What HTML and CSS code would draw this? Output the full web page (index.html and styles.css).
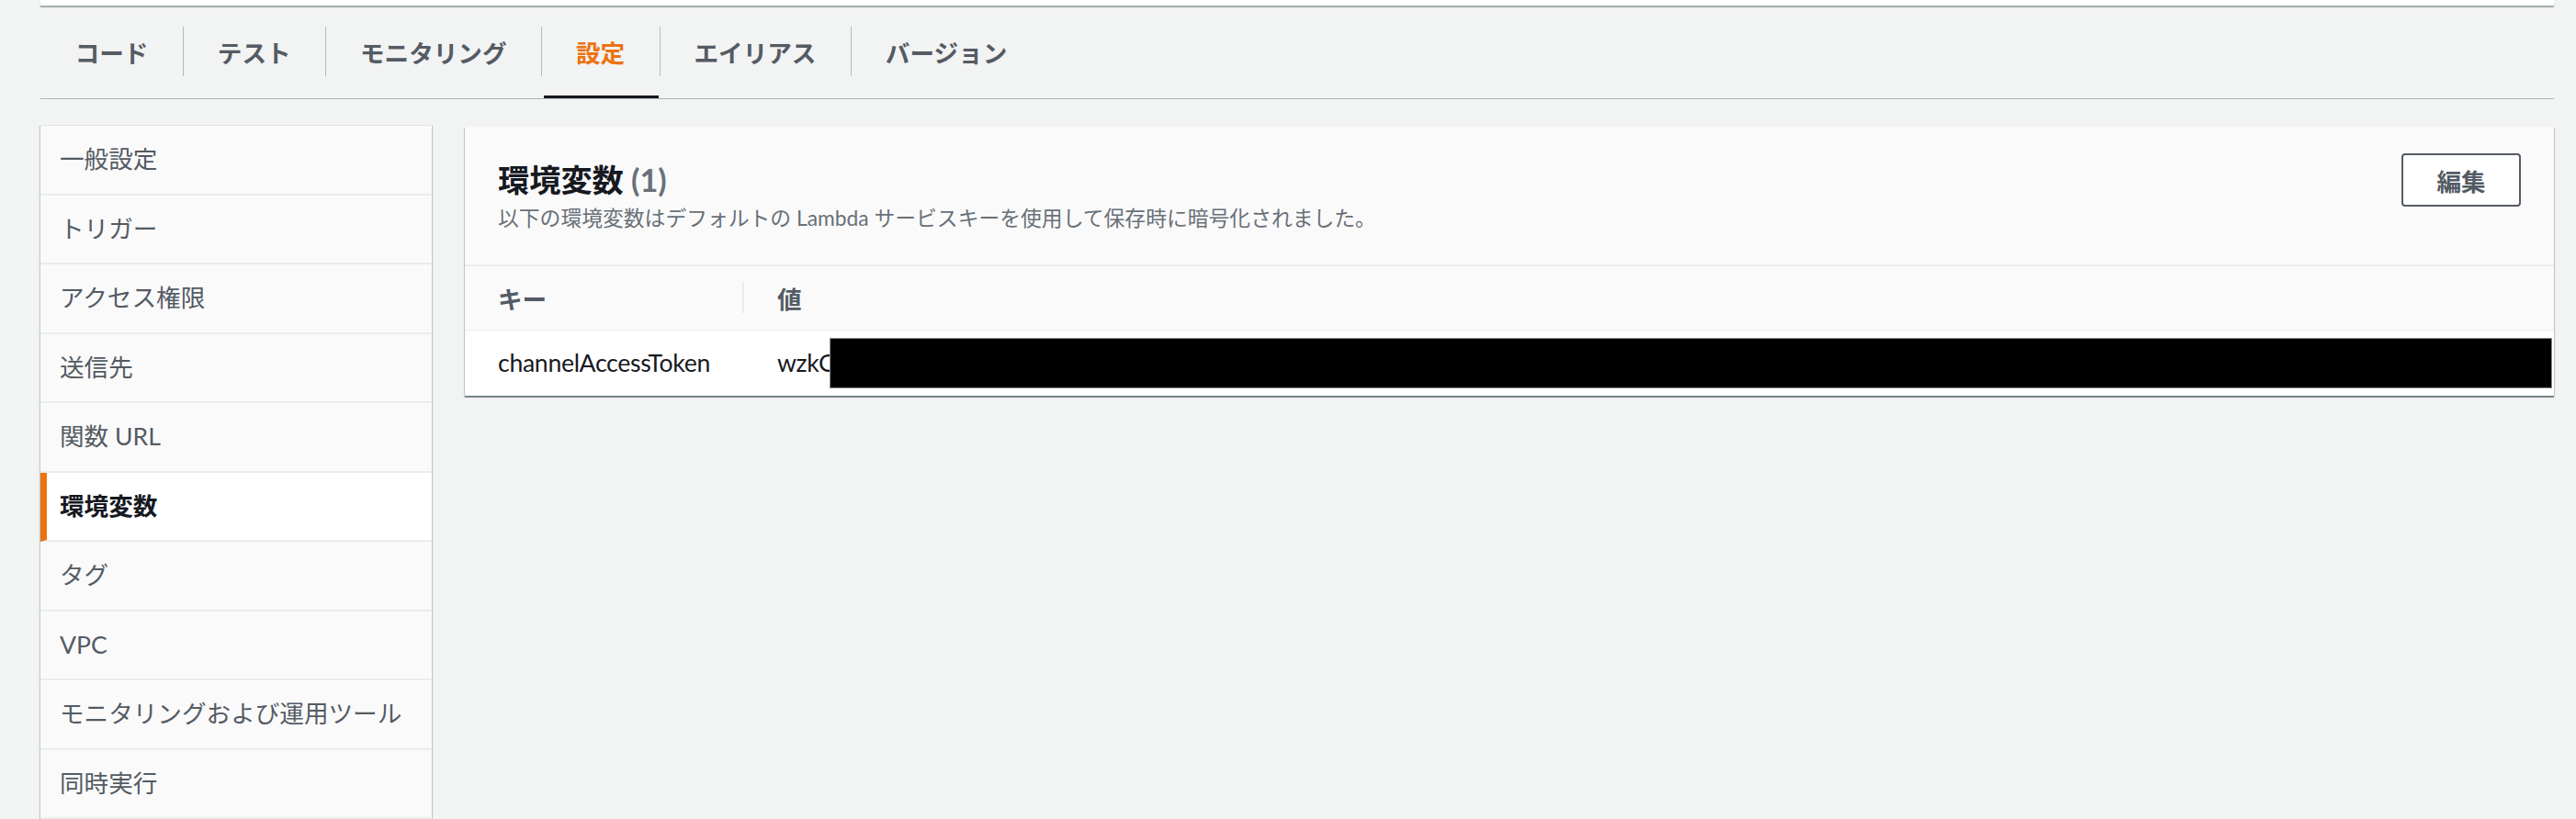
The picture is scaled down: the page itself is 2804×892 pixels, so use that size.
FILE: index.html
```html
<!DOCTYPE html>
<html lang="ja">

<head>
    <meta charset="UTF-8">
    <meta name="viewport" content="width=device-width, initial-scale=1.0">
    <title>環境変数</title>
    <link rel="stylesheet" href="styles.css">
</head>

<body>
    <div class="page">
        <div class="topcard"></div>

        <!-- タブ -->
        <nav class="tabs">
            <a class="tab">コード</a>
            <a class="tab">テスト</a>
            <a class="tab">モニタリング</a>
            <a class="tab active">設定</a>
            <a class="tab">エイリアス</a>
            <a class="tab">バージョン</a>
        </nav>

        <div class="layout">
            <!-- 設定メニュー -->
            <ul class="sidenav">
                <li>一般設定</li>
                <li>トリガー</li>
                <li>アクセス権限</li>
                <li>送信先</li>
                <li>関数 URL</li>
                <li class="active">環境変数</li>
                <li>タグ</li>
                <li>VPC</li>
                <li>モニタリングおよび運用ツール</li>
                <li>同時実行</li>
            </ul>

            <!-- 環境変数パネル -->
            <section class="panel">
                <div class="panel-head">
                    <div>
                        <h2 class="panel-title">環境変数 <span class="count">(1)</span></h2>
                        <p class="panel-desc">以下の環境変数はデフォルトの Lambda サービスキーを使用して保存時に暗号化されました。</p>
                    </div>
                    <button class="btn">編集</button>
                </div>
                <table class="vars">
                    <thead>
                        <tr>
                            <th>キー</th>
                            <th>値</th>
                        </tr>
                    </thead>
                    <tbody>
                        <tr>
                            <td class="key">channelAccessToken</td>
                            <td class="key">wzkC<span class="redact"></span></td>
                        </tr>
                    </tbody>
                </table>
            </section>
        </div>
    </div>
</body>

</html>
```

FILE: styles.css
```css
body {
    margin: 0;
    background: #f2f3f3;
    font-family: Lato, "Noto Sans CJK JP", sans-serif;
    font-size: 26.6px;
    color: #16191f;
}

.page {
    padding: 0 24px 0 44px;
}

.topcard {
    height: 6px;
    background: #fff;
    box-shadow: 0 2px 1px rgba(0, 28, 36, 0.3);
}

/* タブ */
.tabs {
    display: flex;
    height: 101px;
    border-bottom: 1px solid #aab7b8;
}

.tab {
    position: relative;
    display: flex;
    align-items: center;
    padding: 0 37.7px;
    font-weight: 700;
    color: #545b64;
    cursor: pointer;
}

.tab + .tab::before {
    content: "";
    position: absolute;
    left: 0;
    top: 23px;
    width: 1px;
    height: 54px;
    background: #b4bcbd;
}

.tab.active {
    color: #ec7211;
}

.tab.active::after {
    content: "";
    position: absolute;
    left: 3px;
    right: 1px;
    bottom: 0;
    height: 3px;
    background: #16191f;
}

.layout {
    display: flex;
    align-items: flex-start;
    gap: 36px;
    margin-top: 29px;
}

/* 左メニュー */
.sidenav {
    flex: none;
    width: 426px;
    margin: 0;
    padding: 0;
    list-style: none;
    background: #fafafa;
    box-shadow: -1px 0 1px rgba(0, 28, 36, 0.2), 1px 0 1px rgba(0, 28, 36, 0.2);
}

.sidenav li {
    display: flex;
    align-items: center;
    box-sizing: border-box;
    height: 75.5px;
    padding-left: 21px;
    border-bottom: 2px solid #eaeded;
    color: #545b64;
    line-height: 1.3;
}

.sidenav li.active {
    background: #fff;
    border-left: 7px solid #ec7211;
    padding-left: 14px;
    color: #16191f;
    font-weight: 700;
}

/* パネル */
.panel {
    flex: 1;
    margin-top: 1px;
    background: #fff;
    box-shadow: 0 2px 1px rgba(0, 28, 36, 0.4), 1px 1px 1px rgba(0, 28, 36, 0.15), -1px 1px 1px rgba(0, 28, 36, 0.15);
}

.panel-head {
    display: flex;
    justify-content: space-between;
    align-items: flex-start;
    box-sizing: border-box;
    height: 152px;
    padding: 29px 36px 0;
    background: #fafafa;
    border-bottom: 2px solid #eaeded;
}

.panel-title {
    margin: 9px 0 0;
    font-size: 34.2px;
    line-height: 40px;
    font-weight: 700;
}

.count {
    color: #687078;
}

.panel-desc {
    margin: 6px 0 0;
    font-size: 22.8px;
    line-height: 30px;
    color: #687078;
}

.btn {
    width: 130px;
    height: 58px;
    border: 2px solid #545b64;
    border-radius: 4px;
    background: #fff;
    font: inherit;
    font-weight: 700;
    color: #545b64;
    cursor: pointer;
}

/* テーブル */
.vars {
    width: 100%;
    border-collapse: collapse;
    table-layout: fixed;
}

.vars th,
.vars td {
    box-sizing: border-box;
    padding: 0 36px;
    text-align: left;
}

.vars th:first-child,
.vars td:first-child {
    width: 302px;
}

.vars th + th,
.vars td + td {
    padding-left: 38px;
}

.vars th {
    position: relative;
    height: 69px;
    background: #fafafa;
    border-bottom: 1px solid #eaeded;
    font-weight: 700;
    color: #545b64;
}

.vars th + th::before {
    content: "";
    position: absolute;
    left: 0;
    top: 17px;
    width: 2px;
    height: 34px;
    background: #eaeded;
}

.vars td {
    position: relative;
    height: 72px;
    color: #16191f;
}

.vars td.key {
    letter-spacing: -0.3px;
}

.redact {
    position: absolute;
    left: 95px;
    right: 2px;
    top: 8px;
    bottom: 8px;
    background: #000;
    border: 1px solid #8c8c8c;
}
```
